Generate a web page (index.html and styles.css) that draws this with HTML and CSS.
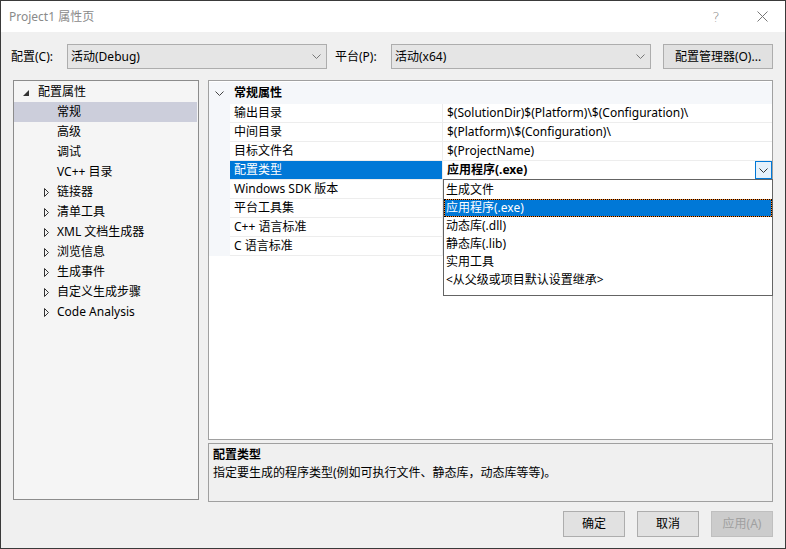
FILE: index.html
```html
<!DOCTYPE html>
<html lang="zh-CN">
<head>
<meta charset="utf-8">
<title>Project1 属性页</title>
<link rel="stylesheet" href="styles.css">
</head>
<body>
<div class="window">
  <div class="titlebar">
    <span class="title">Project1 属性页</span>
    <span class="tb-btn tb-help">?</span>
    <span class="tb-btn tb-close"><svg width="11" height="11" viewBox="0 0 11 11"><path d="M0.5 0.5 L10.5 10.5 M10.5 0.5 L0.5 10.5" stroke="#777" stroke-width="1" fill="none"/></svg></span>
  </div>
  <div class="main">
    <div class="config-row">
      <span class="cfg-label">配置(C):</span>
      <div class="combo"><span>活动(Debug)</span><svg class="chev" width="9" height="5" viewBox="0 0 9 5"><path d="M0.5 0.5 L4.5 4.5 L8.5 0.5" stroke="#777" fill="none"/></svg></div>
      <span class="cfg-label plat">平台(P):</span>
      <div class="combo"><span>活动(x64)</span><svg class="chev" width="9" height="5" viewBox="0 0 9 5"><path d="M0.5 0.5 L4.5 4.5 L8.5 0.5" stroke="#777" fill="none"/></svg></div>
      <button class="btn mgr">配置管理器(O)...</button>
    </div>
    <div class="content">
      <div class="tree">
        <div class="t-item lvl0"><span class="arrow"><svg width="6" height="6" viewBox="0 0 6 6"><polygon points="6,0 6,6 0,6" fill="#333"/></svg></span><span>配置属性</span></div>
        <div class="t-item lvl1 selected"><span class="arrow"></span><span>常规</span></div>
        <div class="t-item lvl1"><span class="arrow"></span><span>高级</span></div>
        <div class="t-item lvl1"><span class="arrow"></span><span>调试</span></div>
        <div class="t-item lvl1"><span class="arrow"></span><span>VC++ 目录</span></div>
        <div class="t-item lvl1"><span class="arrow"><svg width="6" height="9" viewBox="0 0 6 9"><polygon points="0.5,0.5 4.5,4.5 0.5,8.5" fill="none" stroke="#333"/></svg></span><span>链接器</span></div>
        <div class="t-item lvl1"><span class="arrow"><svg width="6" height="9" viewBox="0 0 6 9"><polygon points="0.5,0.5 4.5,4.5 0.5,8.5" fill="none" stroke="#333"/></svg></span><span>清单工具</span></div>
        <div class="t-item lvl1"><span class="arrow"><svg width="6" height="9" viewBox="0 0 6 9"><polygon points="0.5,0.5 4.5,4.5 0.5,8.5" fill="none" stroke="#333"/></svg></span><span>XML 文档生成器</span></div>
        <div class="t-item lvl1"><span class="arrow"><svg width="6" height="9" viewBox="0 0 6 9"><polygon points="0.5,0.5 4.5,4.5 0.5,8.5" fill="none" stroke="#333"/></svg></span><span>浏览信息</span></div>
        <div class="t-item lvl1"><span class="arrow"><svg width="6" height="9" viewBox="0 0 6 9"><polygon points="0.5,0.5 4.5,4.5 0.5,8.5" fill="none" stroke="#333"/></svg></span><span>生成事件</span></div>
        <div class="t-item lvl1"><span class="arrow"><svg width="6" height="9" viewBox="0 0 6 9"><polygon points="0.5,0.5 4.5,4.5 0.5,8.5" fill="none" stroke="#333"/></svg></span><span>自定义生成步骤</span></div>
        <div class="t-item lvl1"><span class="arrow"><svg width="6" height="9" viewBox="0 0 6 9"><polygon points="0.5,0.5 4.5,4.5 0.5,8.5" fill="none" stroke="#333"/></svg></span><span>Code Analysis</span></div>
      </div>
      <div class="right">
        <div class="grid">
          <div class="cat-row">
            <span class="gutter"><svg width="9" height="5" viewBox="0 0 9 5"><path d="M0.5 0.5 L4.5 4.5 L8.5 0.5" stroke="#444" fill="none"/></svg></span>
            <span class="cat-name">常规属性</span>
          </div>
          <div class="p-row"><span class="gutter"></span><span class="p-name">输出目录</span><span class="p-val">$(SolutionDir)$(Platform)\$(Configuration)\</span></div>
          <div class="p-row"><span class="gutter"></span><span class="p-name">中间目录</span><span class="p-val">$(Platform)\$(Configuration)\</span></div>
          <div class="p-row"><span class="gutter"></span><span class="p-name">目标文件名</span><span class="p-val">$(ProjectName)</span></div>
          <div class="p-row active"><span class="gutter"></span><span class="p-name">配置类型</span><span class="p-val"><b>应用程序(.exe)</b><span class="dd-btn"><svg width="9" height="5" viewBox="0 0 9 5"><path d="M0.5 0.5 L4.5 4.5 L8.5 0.5" stroke="#333" fill="none"/></svg></span></span></div>
          <div class="p-row"><span class="gutter"></span><span class="p-name">Windows SDK 版本</span><span class="p-val"></span></div>
          <div class="p-row"><span class="gutter"></span><span class="p-name">平台工具集</span><span class="p-val"></span></div>
          <div class="p-row"><span class="gutter"></span><span class="p-name">C++ 语言标准</span><span class="p-val"></span></div>
          <div class="p-row"><span class="gutter"></span><span class="p-name">C 语言标准</span><span class="p-val"></span></div>
          <div class="popup">
            <div class="pop-item">生成文件</div>
            <div class="pop-item sel">应用程序(.exe)</div>
            <div class="pop-item">动态库(.dll)</div>
            <div class="pop-item">静态库(.lib)</div>
            <div class="pop-item">实用工具</div>
            <div class="pop-item">&lt;从父级或项目默认设置继承&gt;</div>
          </div>
        </div>
        <div class="desc">
          <div class="desc-title">配置类型</div>
          <div class="desc-text">指定要生成的程序类型(例如可执行文件、静态库，动态库等等)。</div>
        </div>
      </div>
    </div>
    <div class="buttons">
      <button class="btn">确定</button>
      <button class="btn">取消</button>
      <button class="btn disabled">应用(A)</button>
    </div>
  </div>
</div>
</body>
</html>
```

FILE: styles.css
```css
* { box-sizing: border-box; }
html, body { margin: 0; padding: 0; }
body {
  width: 786px;
  height: 549px;
  overflow: hidden;
  font-family: "Noto Sans", "Noto Sans CJK SC", sans-serif;
  font-size: 12px;
  color: #000;
}
.window {
  width: 786px;
  height: 549px;
  border: 1px solid #3a3a3a;
  background: #f0f0f0;
  display: flex;
  flex-direction: column;
}
.titlebar {
  flex: none;
  height: 31px;
  background: #fff;
  display: flex;
  align-items: center;
  padding-left: 8px;
}
.title { flex: 1; color: #8a8a8a; line-height: 16px; }
.tb-btn {
  width: 46px;
  height: 31px;
  display: flex;
  align-items: center;
  justify-content: center;
}
.tb-help { color: #8a8a8a; font-size: 14px; font-family: "DejaVu Sans", sans-serif; font-weight: 300; }
.main {
  flex: 1;
  padding: 12px 12px 0 12px;
  display: flex;
  flex-direction: column;
}
.config-row {
  display: flex;
  align-items: center;
  height: 25px;
  margin-left: -2px;
}
.cfg-label { width: 56px; line-height: 16px; }
.cfg-label.plat { margin-left: 8px; }
.combo {
  width: 260px;
  height: 25px;
  border: 1px solid #adadad;
  background: #e5e5e5;
  display: flex;
  align-items: center;
  justify-content: space-between;
  padding: 0 5px 0 3px;
  line-height: 16px;
}
.btn {
  font-family: inherit;
  font-size: 12px;
  color: #000;
  height: 26px;
  width: 62px;
  border: 1px solid #adadad;
  background: #e1e1e1;
  padding: 0;
  line-height: 16px;
}
.btn.mgr { width: 110px; height: 25px; margin-left: 12px; }
.btn.disabled { color: #a0a0a0; background: #cccccc; border-color: #bfbfbf; }
.content {
  display: flex;
  gap: 9px;
  margin-top: 11px;
  height: 422px;
}
.tree {
  width: 186px;
  height: 420px;
  border: 1px solid #8c8c8c;
  background: #f5f5f5;
  padding-top: 1px;
}
.t-item {
  height: 20px;
  display: flex;
  align-items: center;
  line-height: 16px;
  margin-right: 1px;
}
.t-item .arrow {
  width: 16px;
  height: 20px;
  display: flex;
  align-items: center;
}
.t-item.lvl0 { padding-left: 8px; }
.t-item.lvl0 .arrow { padding-left: 1px; padding-top: 2px; }
.t-item.lvl1 { padding-left: 27px; }
.t-item.lvl1 .arrow { padding-left: 3px; }
.t-item.selected { background: #cccedb; }
.right {
  width: 565px;
  display: flex;
  flex-direction: column;
  gap: 3px;
}
.grid {
  position: relative;
  height: 360px;
  border: 1px solid #a0a0a0;
  background: #fff;
  padding-top: 1px;
}
.gutter {
  width: 21px;
  flex: none;
  background: #f5f7fa;
  align-self: stretch;
  display: flex;
  align-items: center;
  padding-left: 6px;
}
.cat-row {
  height: 22px;
  display: flex;
  align-items: center;
  background: #f5f7fa;
}
.cat-name { font-weight: bold; padding-left: 4px; line-height: 16px; }
.p-row {
  height: 19px;
  display: flex;
}
.p-name {
  width: 213px;
  flex: none;
  border-bottom: 1px solid #ededed;
  border-right: 1px solid #ededed;
  padding-left: 4px;
  display: flex;
  align-items: center;
  line-height: 16px;
}
.p-val {
  flex: 1;
  border-bottom: 1px solid #ededed;
  padding-left: 4px;
  display: flex;
  align-items: center;
  justify-content: space-between;
  line-height: 16px;
}
.p-row.active .p-name { background: #0078d7; color: #fff; }
.dd-btn {
  width: 17px;
  height: 18px;
  border: 1px solid #0078d7;
  background: #e5f1fb;
  display: flex;
  align-items: center;
  justify-content: center;
}
.popup {
  position: absolute;
  top: 98px;
  left: 234px;
  right: -1px;
  height: 117px;
  border: 1px solid #646464;
  background: #fff;
  padding-top: 1px;
}
.pop-item {
  height: 18px;
  padding-left: 2px;
  display: flex;
  align-items: center;
  line-height: 16px;
}
.pop-item.sel {
  background: #0078d7;
  color: #fff;
  box-shadow: inset 0 0 0 1px #ff8728;
  outline: 1px dotted #000;
  outline-offset: -1px;
}
.desc {
  height: 59px;
  border: 1px solid #a0a0a0;
  padding: 2px 4px 1px;
}
.desc-title { font-weight: bold; height: 18px; line-height: 18px; }
.desc-text { height: 18px; line-height: 18px; }
.buttons {
  display: flex;
  justify-content: flex-end;
  gap: 12px;
  margin-top: 9px;
}
```
